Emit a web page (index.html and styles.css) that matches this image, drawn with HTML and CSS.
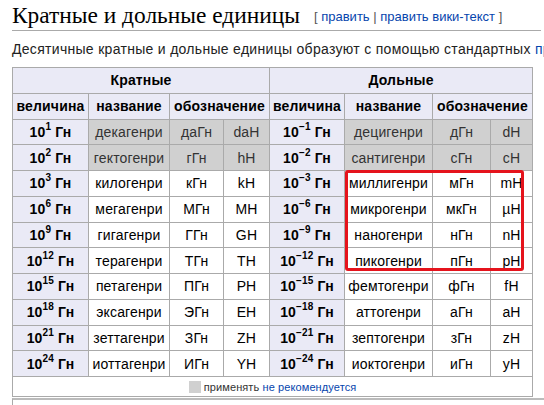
FILE: index.html
```html
<!DOCTYPE html>
<html lang="ru">
<head>
<meta charset="utf-8">
<link rel="stylesheet" href="styles.css">
</head>
<body>
<div class="content">
  <h2 class="heading"><span class="title">Кратные и дольные единицы</span><span class="editsection">[ <a href="#">править</a> | <a href="#">править вики-текст</a> ]</span></h2>
  <p class="intro">Десятичные кратные и дольные единицы образуют с помощью стандартных <a href="#">приставок СИ</a>.</p>
  <div class="table-wrap">
    <table class="units">
      <colgroup>
        <col class="c1"><col class="c2"><col class="c3"><col class="c4">
        <col class="c5"><col class="c6"><col class="c7"><col class="c8">
      </colgroup>
      <tr><th colspan="4">Кратные</th><th colspan="4">Дольные</th></tr>
      <tr><th>величина</th><th>название</th><th colspan="2">обозначение</th><th>величина</th><th>название</th><th colspan="2">обозначение</th></tr>
      <tr class="bad"><th>10<sup>1</sup> Гн</th><td>декагенри</td><td>даГн</td><td>daH</td><th>10<sup>−1</sup> Гн</th><td>децигенри</td><td>дГн</td><td>dH</td></tr>
      <tr class="bad"><th>10<sup>2</sup> Гн</th><td>гектогенри</td><td>гГн</td><td>hH</td><th>10<sup>−2</sup> Гн</th><td>сантигенри</td><td>сГн</td><td>cH</td></tr>
      <tr><th>10<sup>3</sup> Гн</th><td>килогенри</td><td>кГн</td><td>kH</td><th>10<sup>−3</sup> Гн</th><td>миллигенри</td><td>мГн</td><td>mH</td></tr>
      <tr><th>10<sup>6</sup> Гн</th><td>мегагенри</td><td>МГн</td><td>MH</td><th>10<sup>−6</sup> Гн</th><td>микрогенри</td><td>мкГн</td><td>µH</td></tr>
      <tr><th>10<sup>9</sup> Гн</th><td>гигагенри</td><td>ГГн</td><td>GH</td><th>10<sup>−9</sup> Гн</th><td>наногенри</td><td>нГн</td><td>nH</td></tr>
      <tr><th>10<sup>12</sup> Гн</th><td>терагенри</td><td>ТГн</td><td>TH</td><th>10<sup>−12</sup> Гн</th><td>пикогенри</td><td>пГн</td><td>pH</td></tr>
      <tr><th>10<sup>15</sup> Гн</th><td>петагенри</td><td>ПГн</td><td>PH</td><th>10<sup>−15</sup> Гн</th><td>фемтогенри</td><td>фГн</td><td>fH</td></tr>
      <tr><th>10<sup>18</sup> Гн</th><td>эксагенри</td><td>ЭГн</td><td>EH</td><th>10<sup>−18</sup> Гн</th><td>аттогенри</td><td>аГн</td><td>aH</td></tr>
      <tr><th>10<sup>21</sup> Гн</th><td>зеттагенри</td><td>ЗГн</td><td>ZH</td><th>10<sup>−21</sup> Гн</th><td>зептогенри</td><td>зГн</td><td>zH</td></tr>
      <tr><th>10<sup>24</sup> Гн</th><td>иоттагенри</td><td>ИГн</td><td>YH</td><th>10<sup>−24</sup> Гн</th><td>иоктогенри</td><td>иГн</td><td>yH</td></tr>
      <tr class="legend-row"><td colspan="8"><span class="swatch"></span>применять <a href="#">не рекомендуется</a></td></tr>
    </table>
    <div class="highlight"></div>
  </div>
  <div class="next"><div class="next-head"></div></div>
</div>
</body>
</html>
```
FILE: styles.css
```css
html, body {
  margin: 0;
  padding: 0;
  background: #fff;
  overflow: hidden;
}
.content {
  padding: 0 0 0 12px;
  font-family: "Liberation Sans", Arial, sans-serif;
  color: #222;
}
a {
  color: #0645ad;
  text-decoration: none;
}
.heading {
  margin: 0;
  padding: 3px 0 2px;
  border-bottom: 1px solid #aaa;
  font-weight: normal;
  margin-right: 3px;
  white-space: nowrap;
  line-height: 23px;
}
.title {
  font-family: "Liberation Serif", "Times New Roman", serif;
  font-size: 23.4px;
  color: #000;
}
.editsection {
  font-family: "Liberation Sans", Arial, sans-serif;
  font-size: 13px;
  color: #555;
  margin-left: 14px;
  vertical-align: 2px;
}
.intro {
  margin: 8px 0 0;
  font-size: 14px;
  line-height: 20px;
  letter-spacing: 0.3px;
  white-space: nowrap;
}
.table-wrap {
  position: relative;
  margin-top: 8px;
  width: 521px;
}
.units {
  border-collapse: collapse;
  table-layout: fixed;
  width: 521px;
  font-size: 14px;
  letter-spacing: 0.15px;
  color: #000;
  background: #fff;
}
.c1 { width: 76px; }
.c2 { width: 81px; }
.c3 { width: 54px; }
.c4 { width: 46px; }
.c5 { width: 75px; }
.c6 { width: 88px; }
.c7 { width: 58px; }
.c8 { width: 42px; }
.units th, .units td {
  border: 1px solid #aaa;
  padding: 0;
  height: 24.75px;
  text-align: center;
  white-space: nowrap;
  line-height: 18px;
}
.units th {
  background: #eaeaf6;
  font-weight: bold;
}
.units sup {
  font-size: 10px;
  line-height: 0;
  vertical-align: 7px;
}
.units tr.bad td {
  background: #d0d0d0;
  color: #333;
}
.units .legend-row td {
  height: 19px;
  font-size: 11px;
  line-height: 14px;
  letter-spacing: 0.1px;
  color: #333;
}
.swatch {
  display: inline-block;
  width: 12px;
  height: 12px;
  background: #d0d0d0;
  vertical-align: -2px;
  margin-right: 3px;
}
.highlight {
  position: absolute;
  left: 333px;
  top: 103px;
  width: 179px;
  height: 101px;
  box-sizing: border-box;
  border: 3px solid #e5131c;
  border-radius: 3px;
}
.next {
  margin-top: 1px;
  border-left: 1px solid #aaa;
  border-top: 2px solid #bbb;
  padding: 5px 0 0 4px;
}
.next-head {
  height: 30px;
  background: #ccccfa;
}
```
